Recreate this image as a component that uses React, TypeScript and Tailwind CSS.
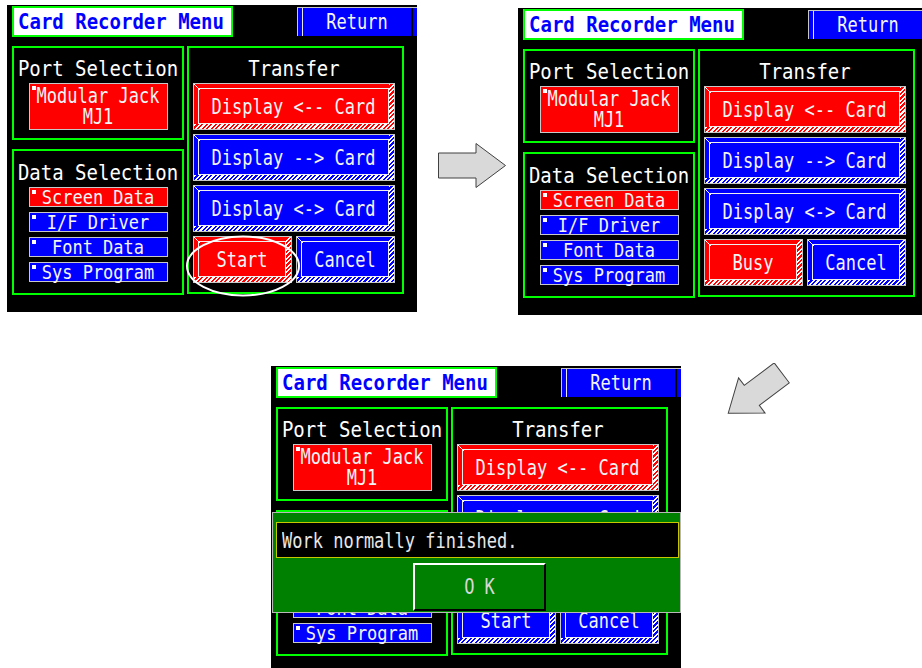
import React from "react";

type Tone = "red" | "blue";

const HATCH: Record<Tone, string> = {
  red: "bg-[repeating-linear-gradient(135deg,#ffffff_0px,#ffffff_1.6px,#ff0000_1.6px,#ff0000_3.2px)]",
  blue: "bg-[repeating-linear-gradient(135deg,#ffffff_0px,#ffffff_1.6px,#0000ff_1.6px,#0000ff_3.2px)]",
};

const FILL: Record<Tone, string> = {
  red: "bg-[#ff0000]",
  blue: "bg-[#0000ff]",
};

const Label: React.FC<{ children: React.ReactNode }> = ({ children }) => (
  <span className="inline-block scale-y-[1.2] whitespace-pre leading-none">{children}</span>
);

type BevelProps = { label: string; tone: Tone; className?: string };

const BevelButton: React.FC<BevelProps> = ({ label, tone, className = "" }) => (
  <div className={`relative flex flex-col border border-[#c8c8c8] ${HATCH[tone]} ${className}`}>
    <div className={`mr-[5px] mb-[5px] flex flex-1 flex-col pt-[4px] pl-[4px] ${FILL[tone]}`}>
      <div className="flex flex-1 items-center justify-center border border-[#f0f0f0] pt-[2px] text-[17px] text-[#f4f4f4]">
        <Label>{label}</Label>
      </div>
    </div>
    <svg className="absolute left-0 top-0" width="6" height="6">
      <line x1="0" y1="0" x2="6" y2="6" stroke="#ffffff" strokeWidth="1" />
    </svg>
  </div>
);

type FlatProps = { tone: Tone; className?: string; children: React.ReactNode };

const FlatButton: React.FC<FlatProps> = ({ tone, className = "", children }) => (
  <div
    className={`relative flex flex-col items-center justify-center border border-[#c8c8c8] text-[17px] text-[#f4f4f4] ${FILL[tone]} ${className}`}
  >
    <span className="absolute left-[2px] top-[2px] h-[4px] w-[4px] bg-white" />
    {children}
  </div>
);

const SmallLabel: React.FC<{ children: React.ReactNode }> = ({ children }) => (
  <span className="inline-block scale-y-[1.1] whitespace-pre leading-none">{children}</span>
);

const ReturnButton = () => (
  <div className="ml-auto mt-[1px] flex h-[29px] w-[120px] border-t border-l border-[#c8c8c8] bg-[#0000ff]">
    <div className="ml-[4px] mr-[4px] flex flex-1 items-center justify-center border-l border-r-2 border-l-[#e8e8e8] border-r-black text-[17px] text-[#f4f4f4]">
      <Label>Return</Label>
    </div>
  </div>
);

type ScreenProps = {
  transferRow: { left: string; leftTone: Tone };
  dialog?: boolean;
  ring?: boolean;
  className?: string;
};

const Screen: React.FC<ScreenProps> = ({ transferRow, dialog, ring, className = "" }) => (
  <div
    className={`relative h-[307px] w-[410px] shrink-0 overflow-hidden bg-black font-['DejaVu_Sans_Mono',monospace] ${className}`}
  >
    <div className="flex items-start pl-[5px] pt-[1px]">
      <div className="flex h-[31px] w-[221px] items-center border-2 border-[#00ff00] bg-white pl-[4px] text-[19px] font-bold leading-none text-[#0000ff]">
        <span className="inline-block scale-y-[1.12] whitespace-pre">Card Recorder Menu</span>
      </div>
      <ReturnButton />
    </div>

    <div className="mt-[9px] flex items-start pl-[5px]">
      <div className="flex w-[172px] flex-col gap-[9px]">
        <div className="flex h-[94px] flex-col items-center border-2 border-[#00ff00] pt-[9px]">
          <div className="h-[22px] text-[19px] leading-[22px] text-white">
            <span className="inline-block scale-y-[1.08] whitespace-pre">Port Selection</span>
          </div>
          <FlatButton tone="red" className="mt-[4px] h-[47px] w-[139px]">
            <div className="flex h-[21px] items-center">
              <Label>Modular Jack</Label>
            </div>
            <div className="flex h-[21px] items-center">
              <Label>MJ1</Label>
            </div>
          </FlatButton>
        </div>

        <div className="flex h-[146px] flex-col items-center border-2 border-[#00ff00] pt-[10px]">
          <div className="h-[22px] text-[19px] leading-[22px] text-white">
            <span className="inline-block scale-y-[1.08] whitespace-pre">Data Selection</span>
          </div>
          <div className="mt-[4px] flex flex-col gap-[5px]">
            <FlatButton tone="red" className="h-[20px] w-[139px]">
              <SmallLabel>Screen Data</SmallLabel>
            </FlatButton>
            <FlatButton tone="blue" className="h-[20px] w-[139px]">
              <SmallLabel>I/F Driver</SmallLabel>
            </FlatButton>
            <FlatButton tone="blue" className="h-[20px] w-[139px]">
              <SmallLabel>Font Data</SmallLabel>
            </FlatButton>
            <FlatButton tone="blue" className="h-[20px] w-[139px]">
              <SmallLabel>Sys Program</SmallLabel>
            </FlatButton>
          </div>
        </div>
      </div>

      <div className="ml-[3px] flex h-[248px] w-[217px] flex-col border-2 border-[#00ff00] pt-[9px] pl-[4px]">
        <div className="h-[22px] pr-[7px] text-center text-[19px] leading-[22px] text-white">
          <span className="inline-block scale-y-[1.08] whitespace-pre">Transfer</span>
        </div>
        <div className="mt-[4px] flex w-[202px] flex-col gap-[4px]">
          <BevelButton label="Display <-- Card" tone="red" className="h-[47px]" />
          <BevelButton label="Display --> Card" tone="blue" className="h-[47px]" />
          <BevelButton label="Display <-> Card" tone="blue" className="h-[47px]" />
          <div className="flex gap-[4px]">
            <BevelButton label={transferRow.left} tone={transferRow.leftTone} className="h-[47px] w-[99px]" />
            <BevelButton label="Cancel" tone="blue" className="h-[47px] w-[99px]" />
          </div>
        </div>
      </div>
    </div>

    {ring && (
      <svg className="absolute left-[178px] top-[229px]" width="116" height="64">
        <ellipse cx="58" cy="32" rx="56" ry="29.5" fill="none" stroke="#ffffff" strokeWidth="2" />
      </svg>
    )}

    {dialog && (
      <div className="absolute left-[1px] top-[146px] h-[101px] w-[409px] border border-[#b8b8b8] bg-[#008000]">
        <div className="ml-[3px] mt-[9px] flex h-[36px] w-[403px] items-center border border-[#c8c800] bg-black pl-[5px] pt-[2px] text-[17px] text-[#e8e8e8]">
          <Label>Work normally finished.</Label>
        </div>
        <div className="ml-[140px] mt-[5px] flex h-[48px] w-[133px] items-center justify-center border-2 border-t-white border-l-white border-r-black border-b-black text-[17px] text-[#d8d8d8]">
          <Label>O K</Label>
        </div>
      </div>
    )}
  </div>
);

const ArrowShape = () => (
  <polygon
    points="0.5,10 38,10 38,0.5 67.5,22.5 38,44.5 38,35 0.5,35"
    fill="#d9d9d9"
    stroke="#404040"
    strokeWidth="1"
  />
);

export default function App() {
  return (
    <div className="relative h-[668px] w-[922px] overflow-hidden bg-white">
      <div className="flex items-start pl-[7px] pt-[5px]">
        <Screen transferRow={{ left: "Start", leftTone: "red" }} ring />
        <div className="w-[101px] shrink-0">
          <svg className="ml-[21px] mt-[138px]" width="68" height="45">
            <ArrowShape />
          </svg>
        </div>
        <Screen transferRow={{ left: "Busy", leftTone: "red" }} className="mt-[3px]" />
      </div>

      <div className="mt-[51px] flex items-start pl-[271px]">
        <Screen transferRow={{ left: "Start", leftTone: "blue" }} dialog />
        <svg className="-mt-[3px] ml-[38px] shrink-0" width="72" height="60">
          <g transform="translate(36,30) rotate(143) translate(-34,-22.5)">
            <ArrowShape />
          </g>
        </svg>
      </div>
    </div>
  );
}
